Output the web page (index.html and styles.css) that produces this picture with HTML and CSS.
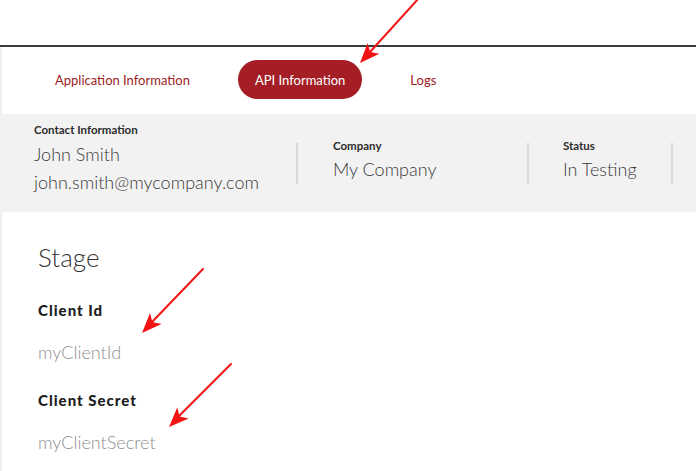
FILE: index.html
```html
<!DOCTYPE html>
<html lang="en">
<head>
<meta charset="utf-8">
<title>API Information</title>
<link rel="stylesheet" href="styles.css">
</head>
<body>
<div class="topbar"></div>
<div class="page">
  <nav class="tabs">
    <a class="tab">Application Information</a>
    <a class="tab active">API Information</a>
    <a class="tab">Logs</a>
  </nav>
  <section class="band">
    <div class="col col-contact">
      <div class="label">Contact Information</div>
      <div class="value">John Smith</div>
      <div class="value">john.smith@mycompany.com</div>
    </div>
    <span class="divider"></span>
    <div class="col col-company">
      <div class="label">Company</div>
      <div class="value">My Company</div>
    </div>
    <span class="divider"></span>
    <div class="col col-status">
      <div class="label">Status</div>
      <div class="value">In Testing</div>
    </div>
    <span class="divider"></span>
  </section>
  <main class="content">
    <h1 class="stage">Stage</h1>
    <div class="field">
      <div class="field-label">Client Id</div>
      <div class="field-value">myClientId</div>
    </div>
    <div class="field">
      <div class="field-label">Client Secret</div>
      <div class="field-value">myClientSecret</div>
    </div>
  </main>
</div>
<svg class="arrows" width="696" height="471" viewBox="0 0 696 471" aria-hidden="true">
  <g stroke="#f21414" stroke-width="2" fill="none" stroke-linecap="round">
    <line x1="419" y1="-2" x2="370" y2="52"/>
    <line x1="203" y1="269" x2="152" y2="322"/>
    <line x1="231" y1="364" x2="179" y2="416"/>
  </g>
  <g fill="#f21414">
    <polygon points="360,63 379.4,53.7 370.2,52 367.6,42.9"/>
    <polygon points="142,333 161.6,324 152.4,322.1 150,313"/>
    <polygon points="169,427 188.7,418.4 179.5,416.4 177.3,407.2"/>
  </g>
</svg>
</body>
</html>
```

FILE: styles.css
```css
* { box-sizing: border-box; }
html, body { margin: 0; padding: 0; background: #fff; }
body {
  font-family: Lato, "Open Sans", "Liberation Sans", sans-serif;
  color: #3a3a3a;
  width: 696px;
  height: 471px;
  overflow: hidden;
  position: relative;
}
.topbar {
  height: 47px;
  border-bottom: 2px solid #3b3b3b;
}
.page {
  border-left: 2px solid #efefef;
  min-height: 424px;
}
.tabs {
  height: 67px;
  display: flex;
  align-items: center;
  gap: 31px;
  padding-left: 36px;
  padding-bottom: 2px;
}
.tab {
  display: flex;
  align-items: center;
  height: 39px;
  padding: 0 17px;
  font-size: 13px;
  color: #9b1c23;
  border-radius: 20px;
}
.tab.active {
  background: #a51d25;
  color: #fff;
}
.band {
  background: #f2f2f2;
  height: 98px;
  margin-left: -2px;
  display: flex;
  align-items: center;
  padding-left: 34px;
}
.col { display: flex; flex-direction: column; }
.col-contact { width: 262px; margin-top: -8px; }
.col-company { width: 229px; padding-left: 35px; margin-top: -4px; }
.col-status { width: 142px; padding-left: 34px; margin-top: -4px; }
.divider {
  width: 2px;
  height: 41px;
  background: #d9d9d9;
}
.label {
  font-size: 11.5px;
  font-weight: 700;
  color: #2b2b2b;
  line-height: 14px;
}
.value {
  font-size: 18px;
  font-weight: 300;
  color: #3a3a3a;
  line-height: 28px;
}
.col-contact .label { margin-bottom: 3px; }
.col-company .label, .col-status .label { margin-bottom: 2px; }
.content {
  padding: 28px 0 0 36px;
}
.stage {
  margin: 0;
  font-size: 26px;
  font-weight: 300;
  line-height: 34px;
  color: #333;
}
.field { margin-top: 26px; }
.field + .field { margin-top: 27px; }
.field-label {
  font-size: 15px;
  font-weight: 900;
  letter-spacing: 1px;
  color: #1d1d1d;
  line-height: 20px;
}
.field-value {
  margin-top: 21px;
  font-size: 18px;
  font-weight: 300;
  color: #8f8f8f;
  line-height: 22px;
}
.arrows {
  position: absolute;
  left: 0;
  top: 0;
  pointer-events: none;
}
```
